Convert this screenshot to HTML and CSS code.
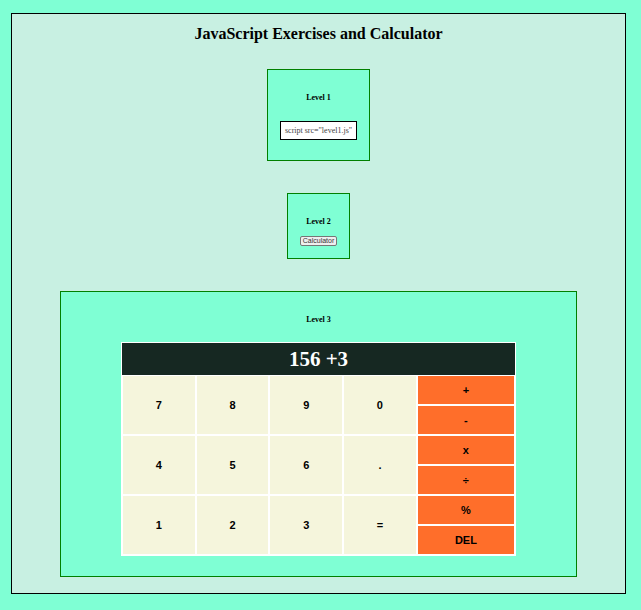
FILE: index.html
```html
<!DOCTYPE html>
<html lang="en">
<head>
<meta charset="utf-8">
<title>JavaScript Exercises and Calculator</title>
<link rel="stylesheet" href="styles.css">
</head>
<body>
<main class="page">
  <h1 class="title">JavaScript Exercises and Calculator</h1>
  <section class="level">
    <h2 class="level-title">Level 1</h2>
    <p class="script-note">script src="level1.js"</p>
  </section>
  <section class="level">
    <h2 class="level-title">Level 2</h2>
    <button class="open-button" type="button">Calculator</button>
  </section>
  <section class="level level-wide">
    <h2 class="level-title">Level 3</h2>
    <div class="calculator">
      <output class="display">156 +3</output>
      <div class="keys">
        <button class="key" type="button">7</button>
        <button class="key" type="button">8</button>
        <button class="key" type="button">9</button>
        <button class="key" type="button">0</button>
        <button class="key operator" type="button">+</button>
        <button class="key operator" type="button">-</button>
        <button class="key" type="button">4</button>
        <button class="key" type="button">5</button>
        <button class="key" type="button">6</button>
        <button class="key" type="button">.</button>
        <button class="key operator" type="button">x</button>
        <button class="key operator" type="button">÷</button>
        <button class="key" type="button">1</button>
        <button class="key" type="button">2</button>
        <button class="key" type="button">3</button>
        <button class="key" type="button">=</button>
        <button class="key operator" type="button">%</button>
        <button class="key operator" type="button">DEL</button>
      </div>
    </div>
  </section>
</main>
</body>
</html>
```
FILE: styles.css
```css
* {
  box-sizing: border-box;
}

body {
  margin: 13px 15px 16px 11px;
  background: aquamarine;
  font-family: "Liberation Serif", "Times New Roman", serif;
  color: #000;
}

.page {
  display: flex;
  flex-direction: column;
  align-items: center;
  gap: 32px;
  padding: 10px 48px 16px;
  border: 1px solid #000;
  background: #c8f0e2;
}

.title {
  margin: 0 0 -6px;
  font-size: 16px;
  line-height: 19px;
}

.level {
  display: flex;
  flex-direction: column;
  align-items: center;
  padding: 12px;
  border: 1px solid green;
  background: aquamarine;
}

.level-wide {
  align-self: stretch;
  padding: 12px 60px 20px;
}

.level-title {
  margin: 11px 0 9px;
  font-size: 8px;
  line-height: 10px;
}

.script-note {
  margin: 9px 0 8px;
  padding: 4px;
  border: 1px solid #000;
  background: #fff;
  color: #444;
  font-size: 8px;
  line-height: 9px;
}

.open-button {
  height: 10px;
  padding: 0 2px;
  border: 1px solid #767676;
  border-radius: 2px;
  background: #efefef;
  color: #333;
  font-family: "Liberation Sans", Arial, sans-serif;
  font-size: 7px;
  line-height: 8px;
}

.calculator {
  align-self: stretch;
  margin-top: 8px;
  border: 1px solid #fff;
}

.display {
  display: block;
  background: #162822;
  color: #fff;
  font-size: 21px;
  font-weight: bold;
  line-height: 32px;
  text-align: center;
}

.keys {
  display: grid;
  grid-template-columns: repeat(4, 3fr) 4fr;
  grid-auto-rows: 30px;
}

.key {
  grid-row: span 2;
  min-width: 0;
  padding: 0;
  border: 1px solid #fff;
  background: beige;
  color: #000;
  font-family: "Liberation Sans", Arial, sans-serif;
  font-size: 11px;
  font-weight: bold;
}

.operator {
  grid-column: 5;
  grid-row: span 1;
  background: #ff6e2a;
}
```
